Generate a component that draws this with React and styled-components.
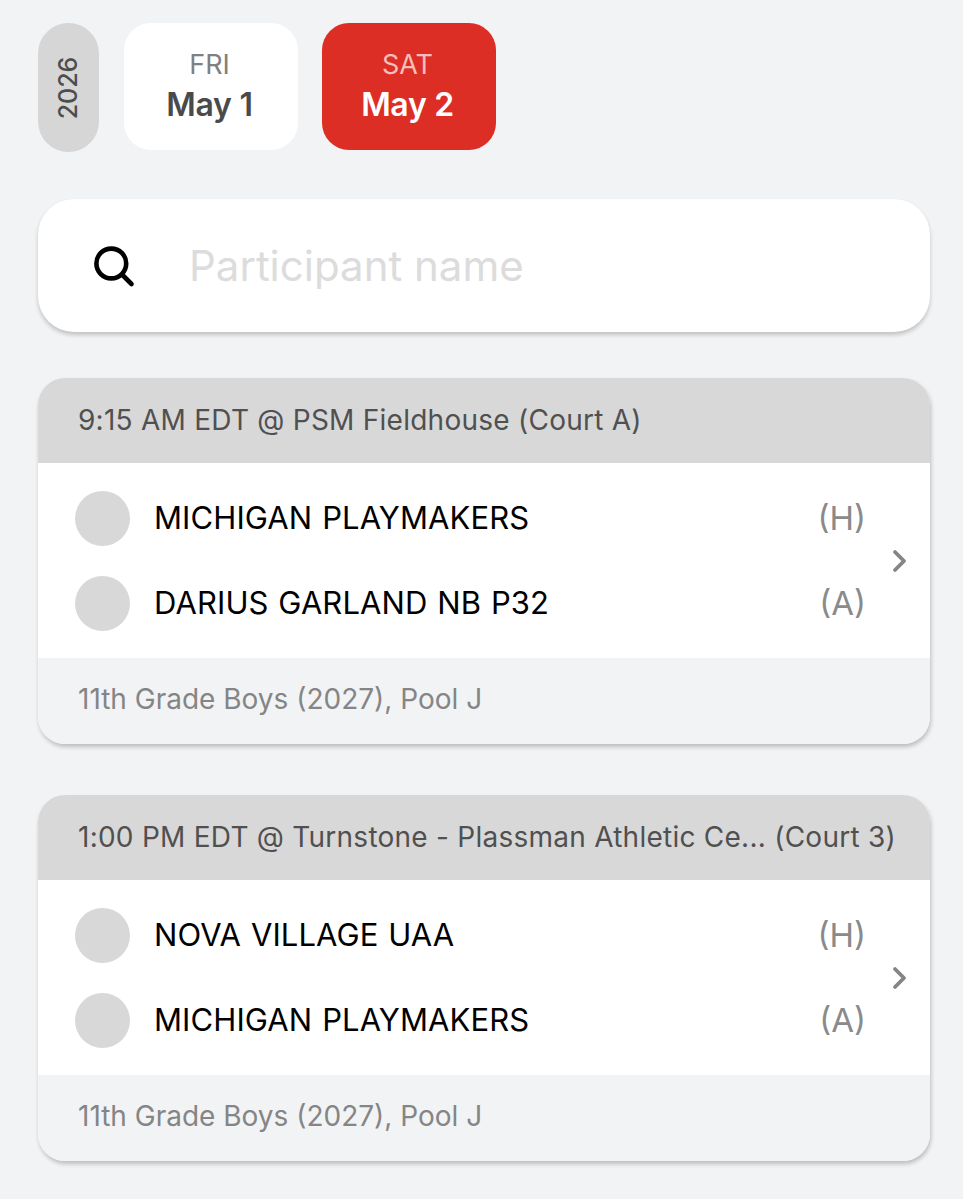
import React from 'react';
import styled, { createGlobalStyle } from 'styled-components';

const Global_Styled = createGlobalStyle`
  html, body {
    margin: 0;
    padding: 0;
    background: #f2f3f5;
    font-family: Inter, "Liberation Sans", sans-serif;
  }
  * {
    box-sizing: border-box;
  }
`;

const Page = styled.div`
  width: 963px;
  height: 1199px;
  overflow: hidden;
  padding: 23px 33px 0 38px;
`;

const DateRow = styled.div`
  display: flex;
  align-items: flex-start;
  height: 129px;
`;

const YearPill = styled.div`
  width: 61px;
  height: 129px;
  margin-right: 25px;
  border-radius: 31px;
  background: #d6d6d6;
  color: #4d4d4d;
  display: flex;
  align-items: center;
  justify-content: center;
  font-size: 25px;
  font-weight: 500;
  span {
    display: block;
    transform: rotate(-90deg);
  }
`;

const DateCard = styled.div`
  width: 174px;
  height: 127px;
  margin-right: 24px;
  border-radius: 27px;
  background: ${(p) => (p.$active ? '#dd2e25' : '#fff')};
  display: flex;
  flex-direction: column;
  align-items: center;
  padding: 25px 3px 0 0;
`;

const DayName = styled.div`
  font-size: 27px;
  line-height: 34px;
  color: ${(p) => (p.$active ? '#f7bdb9' : '#808080')};
`;

const DayDate = styled.div`
  margin-top: 3px;
  font-size: 32px;
  line-height: 40px;
  font-weight: 600;
  letter-spacing: -0.3px;
  color: ${(p) => (p.$active ? '#fff' : '#4a4a4a')};
`;

const SearchBox = styled.div`
  height: 133px;
  margin-top: 47px;
  border-radius: 36px;
  background: #fff;
  box-shadow: 0 3px 4px rgba(0, 0, 0, 0.2);
  display: flex;
  align-items: center;
  padding-left: 54px;
`;

const SearchIcon = styled.svg`
  width: 44px;
  height: 44px;
  margin-right: 53px;
  flex: none;
`;

const Placeholder = styled.div`
  font-size: 42px;
  color: #dcdcdc;
`;

const Card = styled.div`
  margin-top: ${(p) => p.$top}px;
  border-radius: 27px;
  overflow: hidden;
  background: #fff;
  box-shadow: 1px 3px 4px rgba(0, 0, 0, 0.22);
`;

const CardHeader = styled.div`
  height: 85px;
  padding: 0 0 1px 40px;
  background: #d8d8d8;
  color: #505050;
  display: flex;
  align-items: center;
  font-size: 28px;
  letter-spacing: 0.25px;
  white-space: nowrap;
`;

const CardBody = styled.div`
  height: 195px;
  position: relative;
  display: flex;
  flex-direction: column;
  gap: 30px;
  padding: 28px 64px 0 37px;
`;

const TeamRow = styled.div`
  height: 55px;
  display: flex;
  align-items: center;
`;

const TeamLogo = styled.div`
  width: 55px;
  height: 55px;
  margin-right: 25px;
  border-radius: 50%;
  background: #d8d8d8;
  flex: none;
`;

const TeamName = styled.div`
  flex: 1;
  margin-left: -1px;
  padding-bottom: 2px;
  font-size: 31px;
  letter-spacing: 0.1px;
  word-spacing: 1px;
  color: #000;
`;

const TeamSide = styled.div`
  padding-bottom: 2px;
  font-size: 33px;
  color: #8a8a8a;
`;

const Chevron = styled.svg`
  position: absolute;
  right: 20px;
  top: 85px;
  width: 22px;
  height: 28px;
`;

const CardFooter = styled.div`
  height: 86px;
  padding: 0 0 5px 40px;
  background: #f2f3f5;
  color: #858585;
  display: flex;
  align-items: center;
  font-size: 28px;
`;

const games = [
  {
    header: '9:15 AM EDT @ PSM Fieldhouse (Court A)',
    home: 'MICHIGAN PLAYMAKERS',
    away: 'DARIUS GARLAND NB P32',
    top: 46,
  },
  {
    header: '1:00 PM EDT @ Turnstone - Plassman Athletic Ce... (Court 3)',
    home: 'NOVA VILLAGE UAA',
    away: 'MICHIGAN PLAYMAKERS',
    top: 51,
  },
];

const App = () => (
  <Page>
    <Global_Styled />
    <DateRow>
      <YearPill>
        <span>2026</span>
      </YearPill>
      <DateCard>
        <DayName>FRI</DayName>
        <DayDate>May 1</DayDate>
      </DateCard>
      <DateCard $active>
        <DayName $active>SAT</DayName>
        <DayDate $active>May 2</DayDate>
      </DateCard>
    </DateRow>

    <SearchBox>
      <SearchIcon viewBox="0 0 44 44" fill="none" stroke="#000" strokeWidth="4.6" strokeLinecap="round">
        <circle cx="19.3" cy="19.5" r="14.9" />
        <path d="M30 30.5 L39.5 40" />
      </SearchIcon>
      <Placeholder>Participant name</Placeholder>
    </SearchBox>

    {games.map((game, i) => (
      <Card key={i} $top={game.top}>
        <CardHeader>{game.header}</CardHeader>
        <CardBody>
          <TeamRow>
            <TeamLogo />
            <TeamName>{game.home}</TeamName>
            <TeamSide>(H)</TeamSide>
          </TeamRow>
          <TeamRow>
            <TeamLogo />
            <TeamName>{game.away}</TeamName>
            <TeamSide>(A)</TeamSide>
          </TeamRow>
          <Chevron viewBox="0 0 22 28" fill="none" stroke="#858585" strokeWidth="3.8" strokeLinecap="round" strokeLinejoin="round">
            <path d="M7 4 L16 13 L7 22" />
          </Chevron>
        </CardBody>
        <CardFooter>11th Grade Boys (2027), Pool J</CardFooter>
      </Card>
    ))}
  </Page>
);

export default App;
